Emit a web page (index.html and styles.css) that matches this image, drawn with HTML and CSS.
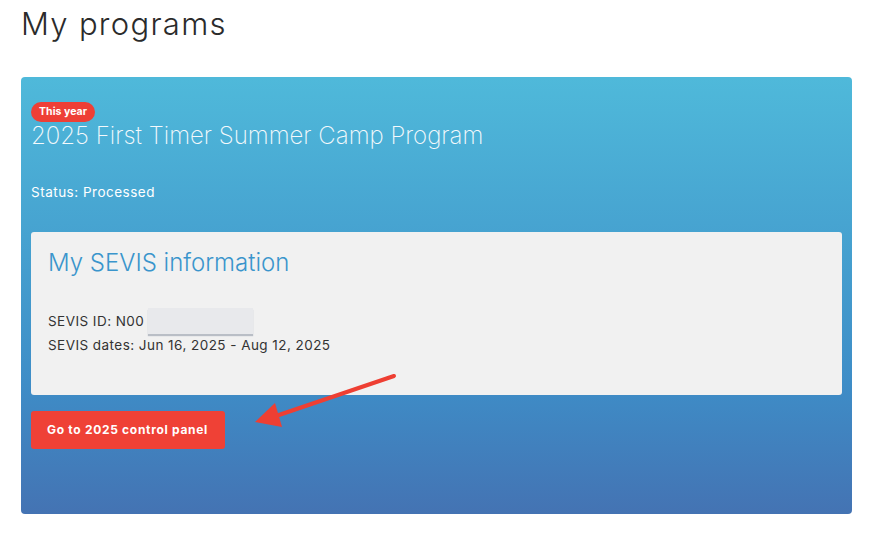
FILE: index.html
```html
<!DOCTYPE html>
<html>
<head>
<meta charset="utf-8">
<link rel="stylesheet" href="styles.css">
</head>
<body>
<main class="page">
  <h1 class="page-title">My programs</h1>
  <section class="program-card">
    <span class="badge">This year</span>
    <h2 class="program-title">2025 First Timer Summer Camp Program</h2>
    <p class="status">Status: Processed</p>
    <div class="sevis-box">
      <h3 class="sevis-title">My SEVIS information</h3>
      <p class="sevis-line">SEVIS ID: N00<span class="redacted"></span></p>
      <p class="sevis-line">SEVIS dates: Jun 16, 2025 - Aug 12, 2025</p>
    </div>
    <a class="cta" href="#">Go to 2025 control panel</a>
    <svg class="arrow" width="160" height="70" viewBox="0 0 160 70">
      <line x1="143" y1="9" x2="22" y2="50" stroke="#ee3f33" stroke-width="4" stroke-linecap="round"/>
      <polygon points="4,55 24,36 31,60" fill="#ee3f33"/>
    </svg>
  </section>
</main>
</body>
</html>
```

FILE: styles.css
```css
* { box-sizing: border-box; }
html, body { margin: 0; padding: 0; background: #fff; }
body {
  font-family: "Inter", "Liberation Sans", sans-serif;
  color: #333;
}
.page {
  padding: 6px 22px 0 21px;
  width: 874px;
}
.page-title {
  margin: 0;
  font-size: 31px;
  font-weight: 300;
  line-height: 36px;
  color: #2b2b2b;
  letter-spacing: 1.3px;
}
.program-card {
  position: relative;
  margin-top: 35px;
  width: 831px;
  height: 437px;
  border-radius: 4px;
  background: linear-gradient(to bottom, #4fb9da 0%, #3e8dc7 70%, #4473b3 100%);
  padding: 25px 10px 0 10px;
  display: flex;
  flex-direction: column;
  align-items: flex-start;
}
.badge {
  display: inline-block;
  background: #ee3f36;
  color: #fff;
  font-size: 10.5px;
  font-weight: 700;
  line-height: 20px;
  height: 20px;
  padding: 0 8px;
  border-radius: 10px;
  letter-spacing: 0.05px;
}
.program-title {
  margin: 1px 0 0 0;
  font-size: 24px;
  font-weight: 200;
  line-height: 26px;
  color: #f4f9fc;
  letter-spacing: 0;
}
.status {
  margin: 34px 0 0 0;
  font-size: 13.5px;
  line-height: 18px;
  color: #fff;
  font-weight: 400;
  letter-spacing: 0.5px;
}
.sevis-box {
  margin-top: 31px;
  width: 811px;
  height: 163px;
  background: #f1f1f1;
  border-radius: 3px;
  padding: 16px 17px;
}
.sevis-title {
  margin: 0 0 34px 0;
  font-size: 24px;
  font-weight: 300;
  line-height: 30px;
  color: #3a95cc;
}
.sevis-line {
  margin: 0 0 6px 0;
  font-size: 13.5px;
  line-height: 18px;
  color: #333;
  display: flex;
  align-items: center;
  letter-spacing: 0.45px;
}
.redacted {
  display: inline-block;
  width: 105px;
  height: 26px;
  background: #e8e9ec;
  box-shadow: 0 2px 1px #b9bec6;
  margin: -4px 0 -4px 4px;
}
.cta {
  margin-top: 16px;
  display: inline-block;
  background: #ef4136;
  color: #fff;
  text-decoration: none;
  font-size: 12px;
  font-weight: 700;
  line-height: 38px;
  height: 38px;
  padding: 0 16px;
  width: 194px;
  border-radius: 3px;
  letter-spacing: 0.7px;
  white-space: nowrap;
}
.arrow {
  position: absolute;
  left: 230px;
  top: 290px;
}
```
